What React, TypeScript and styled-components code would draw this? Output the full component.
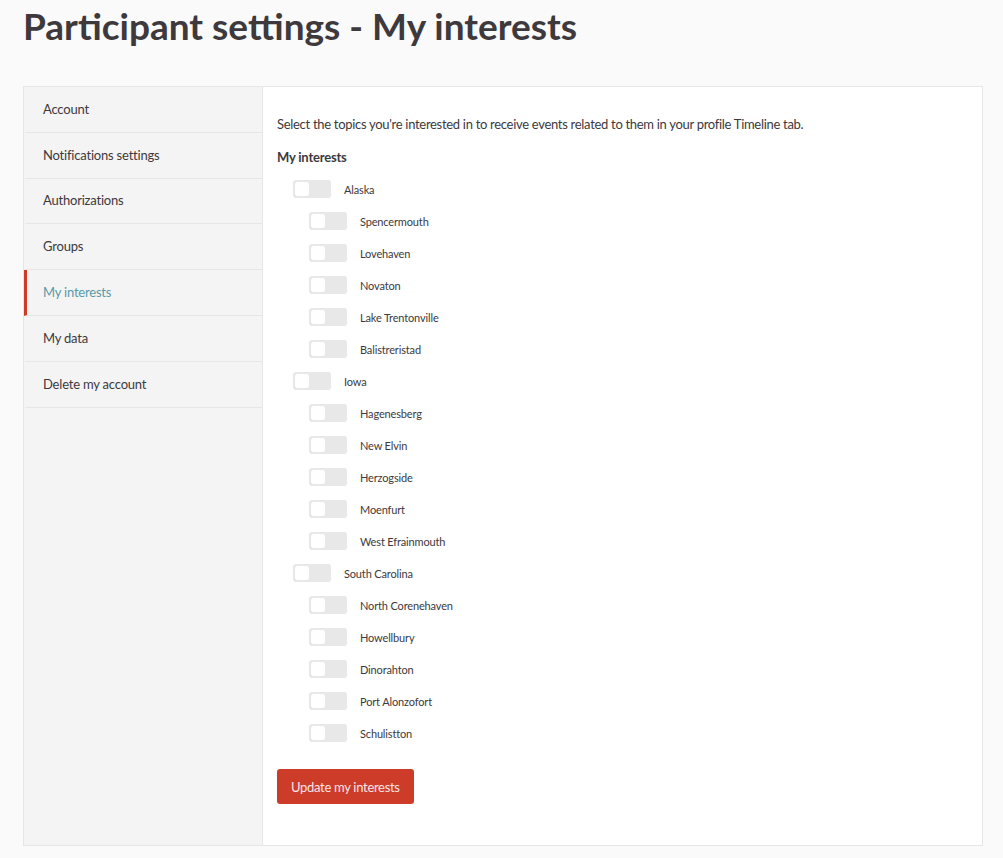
import React from "react";
import styled, { createGlobalStyle } from "styled-components";

const GlobalStyle = createGlobalStyle`
  html, body {
    margin: 0;
    padding: 0;
    background: #fafafa;
    font-family: "Lato", "Noto Sans", sans-serif;
    color: #3d393c;
  }
`;

const Page = styled.div`
  padding: 0 20px 12px 23px;
`;

const Title = styled.h1`
  margin: 0;
  height: 86px;
  padding-top: 5px;
  box-sizing: border-box;
  font-size: 37px;
  font-weight: 700;
  line-height: 42px;
  color: #3d393c;
`;

const Card = styled.div`
  display: grid;
  grid-template-columns: 239px 1fr;
  border: 1px solid #e6e6e6;
  background: #fff;
  width: 960px;
  box-sizing: border-box;
`;

const Sidebar = styled.nav`
  background: #f4f4f4;
  border-right: 1px solid #e6e6e6;
`;

const NavItem = styled.div<{ $active?: boolean }>`
  height: 45.8px;
  box-sizing: border-box;
  display: flex;
  align-items: center;
  padding-left: 16px;
  padding-bottom: 1px;
  border-bottom: 1px solid #e6e6e6;
  border-left: 3px solid ${(p) => (p.$active ? "#cd3c28" : "transparent")};
  font-size: 13px;
  letter-spacing: -0.2px;
  color: ${(p) => (p.$active ? "#599aa6" : "#3d393c")};
`;

const Content = styled.section`
  padding: 27px 14px 41px 14px;
`;

const Intro = styled.p`
  margin: 0 0 13px;
  font-size: 13px;
  letter-spacing: -0.3px;
  line-height: 20px;
`;

const Heading = styled.div`
  font-size: 13px;
  font-weight: 700;
  letter-spacing: -0.2px;
  line-height: 20px;
  margin-bottom: 13px;
`;

const List = styled.div`
  display: flex;
  flex-direction: column;
  gap: 14px;
  margin-bottom: 27px;
`;

const Row = styled.label<{ $level: number }>`
  display: flex;
  align-items: center;
  height: 18px;
  padding-left: ${(p) => 16 + p.$level * 16}px;
  font-size: 11px;
  letter-spacing: -0.15px;
  color: #3d393c;
`;

const Toggle = styled.span`
  position: relative;
  width: 38px;
  height: 18px;
  border-radius: 3px;
  background: #e8e8e8;
  margin-right: 13px;
  flex-shrink: 0;

  &::after {
    content: "";
    position: absolute;
    left: 2px;
    top: 2px;
    width: 14px;
    height: 14px;
    border-radius: 3px;
    background: #fff;
  }
`;

const Button = styled.button`
  height: 35px;
  padding: 0 14px;
  border: none;
  border-radius: 3px;
  background: #cd3c28;
  color: #f7e6ea;
  font-family: inherit;
  font-size: 13px;
  letter-spacing: -0.3px;
  cursor: pointer;
`;

const nav = [
  "Account",
  "Notifications settings",
  "Authorizations",
  "Groups",
  "My interests",
  "My data",
  "Delete my account",
];

const areas: { name: string; children: string[] }[] = [
  {
    name: "Alaska",
    children: ["Spencermouth", "Lovehaven", "Novaton", "Lake Trentonville", "Balistreristad"],
  },
  {
    name: "Iowa",
    children: ["Hagenesberg", "New Elvin", "Herzogside", "Moenfurt", "West Efrainmouth"],
  },
  {
    name: "South Carolina",
    children: ["North Corenehaven", "Howellbury", "Dinorahton", "Port Alonzofort", "Schulistton"],
  },
];

export default function App() {
  return (
    <>
      <GlobalStyle />
      <Page>
        <Title>Participant settings - My interests</Title>
        <Card>
          <Sidebar>
            {nav.map((n) => (
              <NavItem key={n} $active={n === "My interests"}>
                {n}
              </NavItem>
            ))}
          </Sidebar>
          <Content>
            <Intro>
              Select the topics you're interested in to receive events related to them in your
              profile Timeline tab.
            </Intro>
            <Heading>My interests</Heading>
            <List>
              {areas.map((a) => (
                <React.Fragment key={a.name}>
                  <Row $level={0}>
                    <Toggle />
                    {a.name}
                  </Row>
                  {a.children.map((c) => (
                    <Row key={c} $level={1}>
                      <Toggle />
                      {c}
                    </Row>
                  ))}
                </React.Fragment>
              ))}
            </List>
            <Button>Update my interests</Button>
          </Content>
        </Card>
      </Page>
    </>
  );
}
